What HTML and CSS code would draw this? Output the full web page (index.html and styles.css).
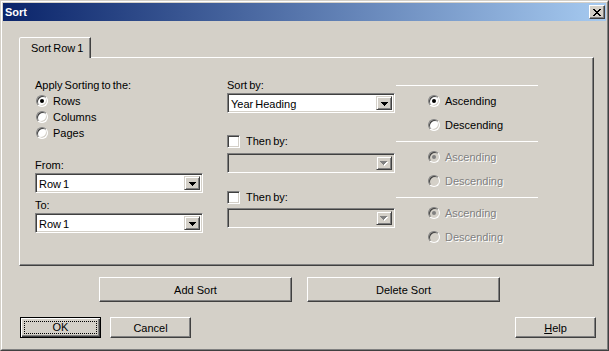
FILE: index.html
```html
<!DOCTYPE html>
<html lang="en">
<head>
  <meta charset="UTF-8" />
  <title>Sort</title>
  <link rel="stylesheet" href="styles.css">
</head>
<body>

  <div class="window">
    <div class="frame">
      <div class="titlebar">
        <span class="title">Sort</span>
        <span class="close">
          <svg width="8" height="7" viewBox="0 0 8 7"><path d="M0 0h2v1H0zM6 0h2v1H6zM1 1h2v1H1zM5 1h2v1H5zM2 2h4v1H2zM3 3h2v1H3zM2 4h4v1H2zM1 5h2v1H1zM5 5h2v1H5zM0 6h2v1H0zM6 6h2v1H6z" fill="#000"/></svg>
        </span>
      </div>

      <div class="client">
        <div class="tabs">
          <div class="tab">Sort Row 1</div>
        </div>

        <div class="panel">
          <!-- where the sort applies -->
          <div class="col col-apply">
            <div class="label">Apply Sorting to the:</div>
            <div class="opt"><span class="radio on"></span>Rows</div>
            <div class="opt"><span class="radio"></span>Columns</div>
            <div class="opt"><span class="radio"></span>Pages</div>

            <div class="label from">From:</div>
            <div class="combo">
              <span class="value">Row 1</span>
              <span class="drop"><svg width="7" height="4" viewBox="0 0 7 4"><path d="M0 0h7v1H0zM1 1h5v1H1zM2 2h3v1H2zM3 3h1v1H3z" fill="#000"/></svg></span>
            </div>
            <div class="label to">To:</div>
            <div class="combo">
              <span class="value">Row 1</span>
              <span class="drop"><svg width="7" height="4" viewBox="0 0 7 4"><path d="M0 0h7v1H0zM1 1h5v1H1zM2 2h3v1H2zM3 3h1v1H3z" fill="#000"/></svg></span>
            </div>
          </div>

          <!-- sort keys -->
          <div class="col col-keys">
            <div class="label">Sort by:</div>
            <div class="combo">
              <span class="value">Year Heading</span>
              <span class="drop"><svg width="7" height="4" viewBox="0 0 7 4"><path d="M0 0h7v1H0zM1 1h5v1H1zM2 2h3v1H2zM3 3h1v1H3z" fill="#000"/></svg></span>
            </div>

            <div class="opt then first"><span class="check"></span>Then by:</div>
            <div class="combo disabled first">
              <span class="value"></span>
              <span class="drop"><svg width="8" height="5" viewBox="0 0 8 5"><path d="M1 1h7v1H1zM2 2h5v1H2zM3 3h3v1H3zM4 4h1v1H4z" fill="#fff"/><path d="M0 0h7v1H0zM1 1h5v1H1zM2 2h3v1H2zM3 3h1v1H3z" fill="#808080"/></svg></span>
            </div>

            <div class="opt then"><span class="check"></span>Then by:</div>
            <div class="combo disabled">
              <span class="value"></span>
              <span class="drop"><svg width="8" height="5" viewBox="0 0 8 5"><path d="M1 1h7v1H1zM2 2h5v1H2zM3 3h3v1H3zM4 4h1v1H4z" fill="#fff"/><path d="M0 0h7v1H0zM1 1h5v1H1zM2 2h3v1H2zM3 3h1v1H3z" fill="#808080"/></svg></span>
            </div>
          </div>

          <!-- order of each key -->
          <div class="col col-order">
            <div class="group">
              <div class="rule"></div>
              <div class="opt"><span class="radio on"></span>Ascending</div>
              <div class="opt"><span class="radio"></span>Descending</div>
            </div>
            <div class="group">
              <div class="rule"></div>
              <div class="opt off"><span class="radio on"></span>Ascending</div>
              <div class="opt off"><span class="radio"></span>Descending</div>
            </div>
            <div class="group">
              <div class="rule"></div>
              <div class="opt off"><span class="radio on"></span>Ascending</div>
              <div class="opt off"><span class="radio"></span>Descending</div>
            </div>
          </div>
        </div>

        <div class="sort-actions">
          <button class="btn wide">Add Sort</button>
          <button class="btn wide">Delete Sort</button>
        </div>

        <div class="dialog-actions">
          <button class="btn default"><span class="focus">OK</span></button>
          <button class="btn">Cancel</button>
          <button class="btn help"><u>H</u>elp</button>
        </div>
      </div>
    </div>
  </div>

</body>
</html>
```

FILE: styles.css
```css
* {
  box-sizing: border-box;
}

body {
  margin: 0;
  background: #d4d0c8;
  font-family: "Liberation Sans", Arial, sans-serif;
  font-size: 11px;
  word-spacing: -1px;
  color: #000;
}

.window {
  width: 609px;
  height: 351px;
  background: #d4d0c8;
  border: 1px solid;
  border-color: #d4d0c8 #404040 #404040 #d4d0c8;
}

.frame {
  height: 100%;
  border: 1px solid;
  border-color: #fff #808080 #808080 #fff;
  padding: 1px;
}

.titlebar {
  height: 18px;
  display: flex;
  align-items: center;
  justify-content: space-between;
  padding: 0 1px 0 2px;
  background: linear-gradient(to right, #0a246a, #a6caf0);
  color: #fff;
}

.title {
  font-weight: bold;
  font-size: 11px;
}

.close {
  width: 16px;
  height: 14px;
  display: flex;
  align-items: center;
  justify-content: center;
  background: #d4d0c8;
  border: 1px solid;
  border-color: #fff #404040 #404040 #fff;
  box-shadow: inset -1px -1px #808080;
}

.client {
  padding: 16px 0 0 16px;
}

.tabs {
  display: flex;
}

.tab {
  position: relative;
  z-index: 1;
  width: 72px;
  height: 21px;
  margin-bottom: -1px;
  padding: 2px 0 0 11px;
  line-height: 16px;
  background: #d4d0c8;
  border: 1px solid;
  border-bottom: none;
  border-color: #fff #404040 transparent #fff;
  border-top-left-radius: 2px;
  box-shadow: inset -1px 0 #808080;
}

.panel {
  width: 575px;
  height: 209px;
  display: flex;
  padding: 19px 0 0 15px;
  border: 1px solid;
  border-color: #fff #404040 #404040 #fff;
  box-shadow: inset -1px -1px #808080;
}

.col {
  display: flex;
  flex-direction: column;
}

.col-apply {
  width: 168px;
}

.col-keys {
  width: 168px;
  margin-left: 24px;
}

.col-order {
  width: 142px;
  margin-left: 1px;
}

.label {
  line-height: 16px;
}

.label.from {
  margin-top: 16px;
}

.label.to {
  margin-top: 4px;
}

.opt {
  height: 16px;
  display: flex;
  align-items: center;
  gap: 5px;
  padding-left: 1px;
  white-space: nowrap;
}

.opt.then {
  margin-top: 16px;
  gap: 6px;
  padding-left: 0;
}

.opt.then.first {
  margin-top: 20px;
}

.opt.off {
  color: #808080;
  text-shadow: 1px 1px #fff;
}

.radio {
  width: 12px;
  height: 12px;
  flex: none;
  display: flex;
  align-items: center;
  justify-content: center;
  border-radius: 50%;
  background: #fff;
  border: 1px solid;
  border-color: #808080 #fff #fff #808080;
  box-shadow: inset 1px 1px #404040, inset -1px -1px #d4d0c8;
}

.radio.on::after {
  content: "";
  width: 4px;
  height: 4px;
  border-radius: 50%;
  background: #000;
}

.off .radio {
  background: #d4d0c8;
}

.off .radio.on::after {
  background: #808080;
}

.check {
  width: 13px;
  height: 13px;
  flex: none;
  background: #fff;
  border: 1px solid;
  border-color: #808080 #fff #fff #808080;
  box-shadow: inset 1px 1px #404040, inset -1px -1px #d4d0c8;
}

.combo {
  height: 20px;
  display: flex;
  align-items: stretch;
  padding: 2px;
  background: #fff;
  border: 1px solid;
  border-color: #808080 #fff #fff #808080;
  box-shadow: inset 1px 1px #404040, inset -1px -1px #d4d0c8;
}

.combo.disabled {
  background: #d4d0c8;
  margin-top: 3px;
}

.combo.disabled.first {
  margin-top: 4px;
}

.combo .value {
  flex: 1;
  padding-left: 1px;
  line-height: 16px;
}

.combo .drop {
  width: 16px;
  display: flex;
  align-items: center;
  justify-content: center;
  padding-top: 1px;
  background: #d4d0c8;
  border: 1px solid;
  border-color: #d4d0c8 #404040 #404040 #d4d0c8;
  box-shadow: inset 1px 1px #fff, inset -1px -1px #808080;
}

.group {
  display: flex;
  flex-direction: column;
}

.rule {
  height: 1px;
  margin-top: 8px;
  margin-bottom: 7px;
  background: #fff;
}

.group .opt {
  padding-left: 32px;
}

.group .opt + .opt {
  margin-top: 8px;
}

.btn {
  font: inherit;
  color: #000;
  height: 21px;
  width: 81px;
  padding: 0;
  background: #d4d0c8;
  border: 1px solid;
  border-color: #fff #404040 #404040 #fff;
  box-shadow: inset -1px -1px #808080;
}

.btn.wide {
  width: 193px;
  height: 25px;
}

.sort-actions {
  display: flex;
  gap: 15px;
  margin-top: 11px;
  padding-left: 80px;
}

.dialog-actions {
  display: flex;
  gap: 9px;
  margin-top: 15px;
  padding: 0 10px 0 1px;
}

.btn.default {
  border-color: #000;
  box-shadow: inset 1px 1px #fff, inset -1px -1px #404040, inset -2px -2px #808080;
}

.btn .focus {
  display: block;
  margin: 0 3px;
  height: 13px;
  line-height: 11px;
  border: 1px dotted #000;
}

.btn.help {
  margin-left: auto;
}
```
